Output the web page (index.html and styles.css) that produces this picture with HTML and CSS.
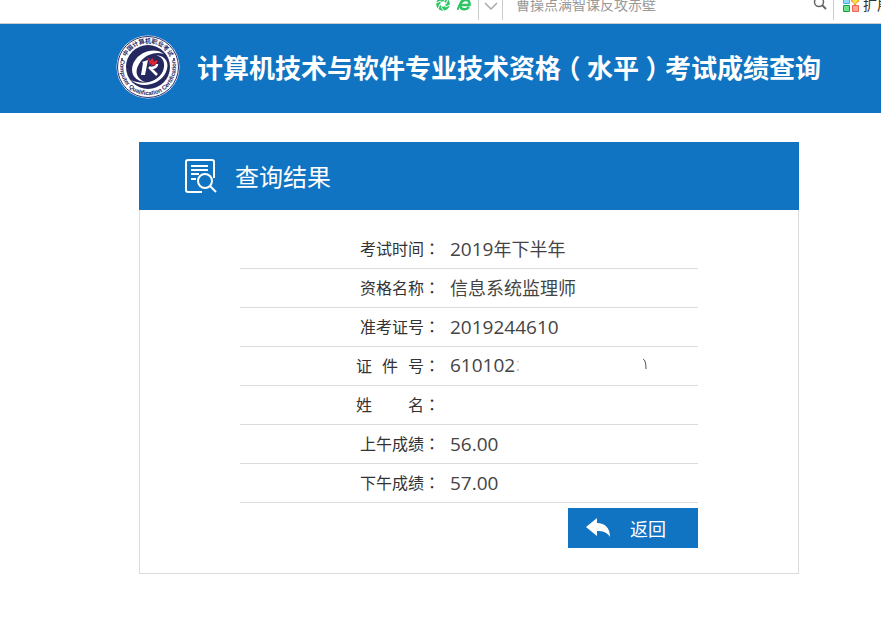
FILE: index.html
```html
<!DOCTYPE html>
<html lang="zh-CN">
<head>
<meta charset="utf-8">
<meta name="viewport" content="width=device-width, initial-scale=1">
<title>计算机技术与软件专业技术资格（水平）考试成绩查询</title>
<link rel="stylesheet" href="styles.css">
</head>
<body>
<div class="toolbar">
  <div class="toolbar-row">
    <svg class="tool-icon" viewBox="0 0 14 14" aria-hidden="true"><circle cx="7" cy="7" r="4.800" fill="none" stroke="#2fc464" stroke-width="4"/><path d="M6 0 9 4M12 2 10 7M14 8 9 10M8 14 5 10M2 12 4 7M0 6 5 4" stroke="#fff" stroke-width="1"/></svg>
    <svg class="tool-icon" viewBox="0 0 14 14" aria-hidden="true"><path d="M4 8h8.500C13 4 10.500 2.500 8 3 4 3.500 2 8 4 11c2 2 6 1.500 8-1" fill="none" stroke="#2fc464" stroke-width="2.500"/><path d="M1 13C0 9 7 1 13 1.500" fill="none" stroke="#2fc464" stroke-width="1.800"/></svg>
    <button class="drop" type="button" aria-label="展开"><svg viewBox="0 0 14 8" width="14" height="8"><path d="M1 1l6 6 6-6" fill="none" stroke="#aaa" stroke-width="1.500"/></svg></button>
    <input class="search" type="text" aria-label="搜索" placeholder="曹操点满智谋反攻赤壁">
    <button class="find" type="button" aria-label="查找"><svg viewBox="0 0 14 14" width="14" height="14"><circle cx="6" cy="6" r="4.500" fill="none" stroke="#666" stroke-width="1.500"/><path d="M9 9l4 4" stroke="#666" stroke-width="2"/></svg></button>
    <button class="extend" type="button"><svg viewBox="0 0 16 16" width="16" height="16"><g stroke-width="1"><path d="M.5 1.500h6v6h-6z" fill="#8fd8ff" stroke="#43aef0"/><path d="M.5 9.500h6v6h-6z" fill="#6ce08b" stroke="#16a34a"/><path d="M9.500 9.500h6v6h-6z" fill="#ffa494" stroke="#ee6352"/><path d="M12 1l1.500 2.500L16 5l-2.500 1.500L12 9l-1.500-2.500L8 5l2.500-1.500z" fill="#ffe24a" stroke="#f09a1a"/></g></svg><span>扩展</span></button>
  </div>
</div>

<header class="banner">
  <svg class="logo" viewBox="0 0 64 64" role="img" aria-label="中国计算机职业考试">
    <defs>
      <path id="arc-top" d="M8 32a24 24 0 0 1 48 0"/>
      <path id="arc-bottom" d="M5.200 24a28 28 0 1 0 53.600 0"/>
    </defs>
    <circle cx="32" cy="32" r="31.500" fill="#fff"/>
    <circle cx="32" cy="32" r="30.500" fill="none" stroke="#2c2c66" stroke-width="1"/>
    <circle cx="32" cy="32" r="22" fill="#25285f"/>
    <text class="logo-cn"><textPath href="#arc-top" startOffset="50%" text-anchor="middle">中国计算机职业考试</textPath></text>
    <text class="logo-en"><textPath href="#arc-bottom" startOffset="50%" text-anchor="middle">Computer Qualification Certification</textPath></text>
    <g fill="#25285f"><circle cx="6" cy="24" r="1"/><circle cx="58" cy="24" r="1"/></g>
    <path d="M48 19C39 12 24 16 18 27c-5 10 0 19 11 20-8-3-11-10-6-18 5-9 16-13 25-10z" fill="#fff"/>
    <path d="M15 45c12 6 27 2 32-9 3-8 0-14-7-16 10 1 14 8 10 17-5 12-24 18-35 8z" fill="#fff"/>
    <path d="M26 27l6-2-3 15h-4l2-12z" fill="#fff"/>
    <path d="M34 33c4 0 7-1 7-4M33 32l8 8" fill="none" stroke="#fff" stroke-width="2.500"/>
    <path d="M31 23c3 0 3 2 3 3l2-3c2 1 2 3 1 4l4-2c1 3-1 5-6 6l1-3-3 2c1-3 0-5-2-7z" fill="#e02632"/>
  </svg>
  <h1>计算机技术与软件专业技术资格<span class="paren">（</span>水平<span class="paren">）</span>考试成绩查询</h1>
</header>

<main>
  <section class="card">
    <div class="card-head">
      <svg class="doc-icon" viewBox="0 0 34 36" aria-hidden="true"><g fill="none" stroke="#fff" stroke-width="2"><path d="M18 34H4a2 2 0 0 1-2-2V4a2 2 0 0 1 2-2h24a2 2 0 0 1 2 2v16"/><path d="M7 8h17M7 12h17M7 16h8M7 21h5"/><circle cx="21" cy="23" r="7"/><path d="M26 28l6 6"/></g></svg>
      <h2>查询结果</h2>
    </div>
    <div class="card-body">
      <table>
        <tr><th scope="row"><span>考试时间</span><span class="colon" lang="zh-TW">：</span></th><td><span class="num">2019</span>年下半年</td></tr>
        <tr><th scope="row"><span>资格名称</span><span class="colon" lang="zh-TW">：</span></th><td>信息系统监理师</td></tr>
        <tr><th scope="row"><span>准考证号</span><span class="colon" lang="zh-TW">：</span></th><td><span class="num">2019244610</span></td></tr>
        <tr><th scope="row"><span class="spread"><span>证</span><span>件</span><span>号</span></span><span class="colon" lang="zh-TW">：</span></th><td><div class="masked"><span class="num">610102</span><svg viewBox="0 0 2 12" width="2" height="12"><path d="M1 2v1M1 10v2" stroke="#999" stroke-width="1"/></svg><svg class="tail" viewBox="0 0 6 16" width="6" height="16"><path d="M1 2q3 1 3 10" fill="none" stroke="#555" stroke-width="1"/></svg></div></td></tr>
        <tr><th scope="row"><span class="spread"><span>姓</span><span>名</span></span><span class="colon" lang="zh-TW">：</span></th><td></td></tr>
        <tr><th scope="row"><span>上午成绩</span><span class="colon" lang="zh-TW">：</span></th><td><span class="num">56.00</span></td></tr>
        <tr><th scope="row"><span>下午成绩</span><span class="colon" lang="zh-TW">：</span></th><td><span class="num">57.00</span></td></tr>
      </table>
      <button class="back" type="button"><svg viewBox="0 0 24 20" width="24" height="20" aria-hidden="true"><path d="M0 9L11 0v5c8 0 13 5 13 14-3-5-7-6-13-6v5z" fill="#fff"/></svg>返回</button>
    </div>
  </section>
</main>
</body>
</html>
```
FILE: styles.css
```css
* { box-sizing: border-box; }
body {
  margin: 0;
  background: #fff;
  color: #444;
  font-family: "Noto Sans CJK SC", "Noto Sans", sans-serif;
}
button, input { font: inherit; border: 0; padding: 0; background: none; }

.toolbar {
  height: 24px;
  overflow: hidden;
  border-bottom: 1px solid #ccc;
}
.toolbar-row {
  display: flex;
  align-items: center;
  height: 32px;
  margin-top: -12px;
  padding-left: 436px;
  font-size: 14px;
}
.tool-icon { flex: none; width: 14px; height: 14px; margin-right: 7px; }
.drop {
  flex: none;
  width: 25px;
  height: 32px;
  border-left: 1px solid #ccc;
  border-right: 1px solid #ccc;
}
.search { flex: 1; min-width: 0; padding-left: 13px; }
.search::placeholder { color: #999; opacity: 1; }
.find {
  flex: none;
  width: 28px;
  height: 32px;
  padding-left: 7px;
  border-right: 1px solid #ccc;
  text-align: left;
}
.extend {
  flex: none;
  display: flex;
  align-items: center;
  gap: 4px;
  width: 47px;
  padding-left: 9px;
  overflow: hidden;
  white-space: nowrap;
  color: #333;
}
.extend svg { flex: none; }

.banner {
  display: flex;
  align-items: center;
  gap: 17px;
  height: 89px;
  padding: 0 0 4px 116px;
  background: #1174c3;
  color: #fff;
}
.logo { flex: none; width: 64px; height: 64px; }
.logo-cn, .logo-en { fill: #25285f; font-weight: 700; }
.logo-cn { font-size: 6px; }
.logo-en { font-family: "Liberation Sans", sans-serif; font-size: 6px; }
h1 { margin: 0; font-size: 26px; line-height: 40px; font-weight: 700; white-space: nowrap; }
.paren {
  display: inline-block;
  width: 26px;
  text-align: center;
  font-feature-settings: "halt";
}

main { padding: 29px 82px 65px 139px; }
.card-head {
  display: flex;
  align-items: center;
  gap: 17px;
  height: 68px;
  padding-left: 45px;
  background: #1174c3;
  color: #fff;
}
.doc-icon { width: 34px; height: 36px; }
h2 { margin: 0; font-size: 24px; line-height: 36px; font-weight: 400; }
.card-body {
  padding: 20px 100px 25px;
  border: 1px solid #dcdcdc;
  border-top: 0;
}
table { width: 100%; border-collapse: separate; border-spacing: 0; table-layout: fixed; }
th, td {
  height: 39px;
  padding: 0 0 2px;
  border-bottom: 1px solid #dcdcdc;
  line-height: 32px;
  vertical-align: middle;
}
th { width: 200px; text-align: right; font-size: 16px; font-weight: 400; color: #333; white-space: nowrap; }
td { padding-left: 10px; font-size: 18px; }
.num { font-family: "Open Sans", "Noto Sans", sans-serif; font-size: 19px; }
.colon { display: inline-block; width: 16px; font-family: "Noto Sans CJK TC", sans-serif; }
.spread { display: inline-flex; justify-content: space-between; width: 68px; }
.masked { display: flex; align-items: center; gap: 2px; height: 32px; }
.tail { margin-left: 121px; }
.back {
  display: flex;
  align-items: center;
  gap: 20px;
  width: 130px;
  height: 40px;
  margin: 5px 0 0 auto;
  padding-left: 18px;
  background: #1174c3;
  color: #fff;
  font-size: 18px;
}
```
